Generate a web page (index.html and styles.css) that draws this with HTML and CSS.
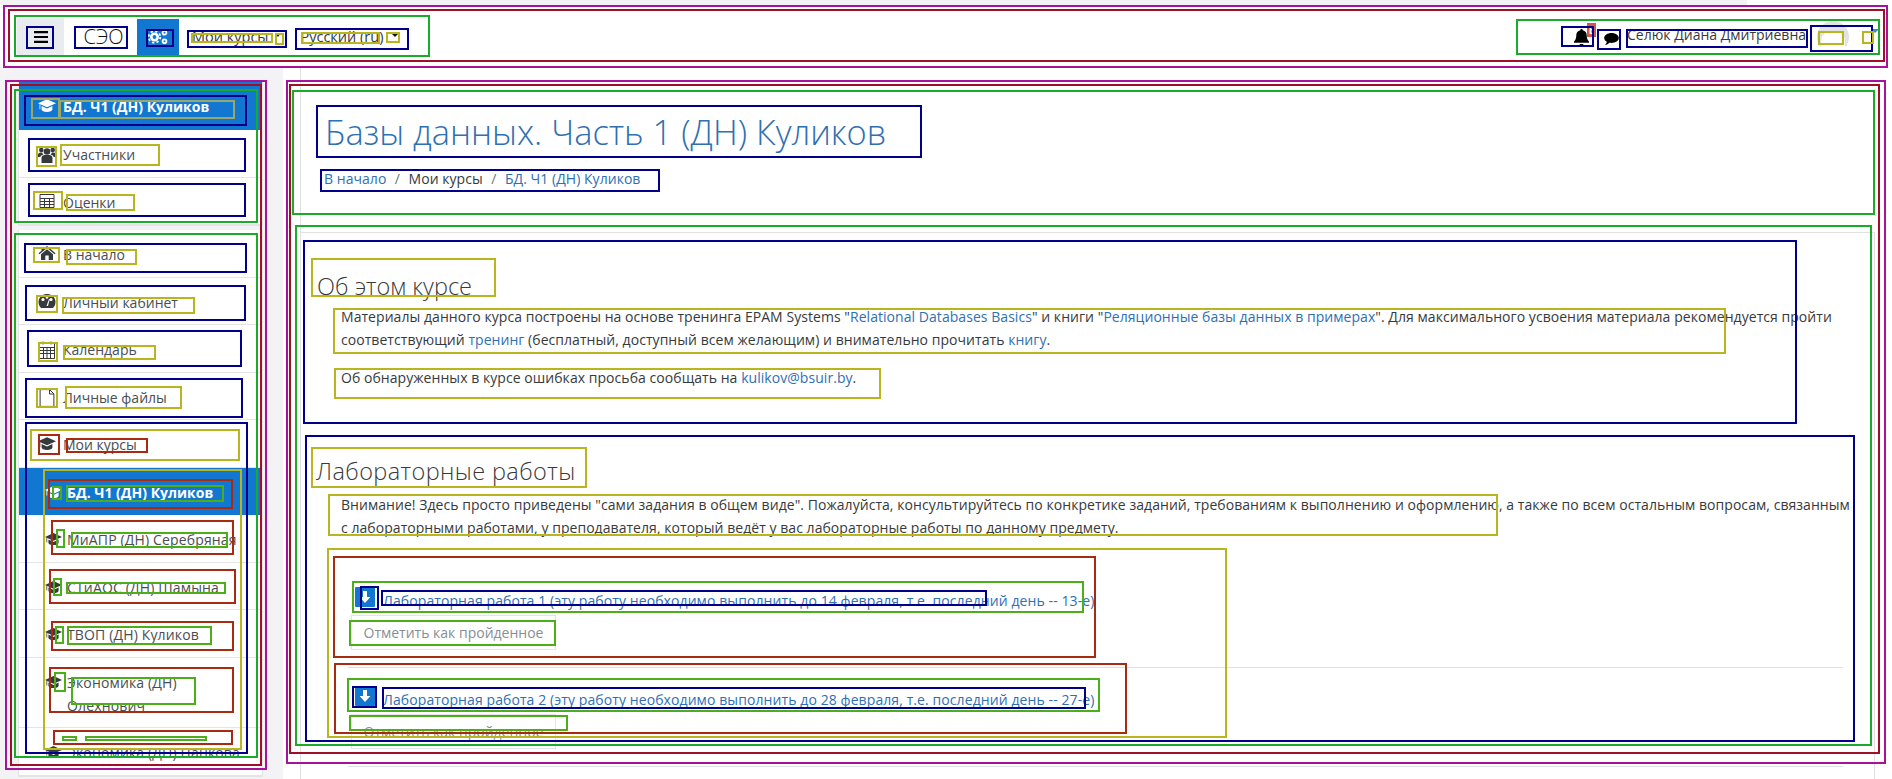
FILE: index.html
```html
<!DOCTYPE html>
<html lang="ru">
<head>
<meta charset="utf-8">
<title>Базы данных. Часть 1 (ДН) Куликов</title>
<link rel="stylesheet" href="styles.css">
</head>
<body>
<svg width="0" height="0" class="defs">
  <symbol id="i-cap" viewBox="0 0 20 16"><path d="M10 1 20 5.5 10 10 0 5.5Z"/><path d="M4 8.6v3.9c0 1.6 2.8 2.7 6 2.700s6-1.100 6-2.700V8.600l-6 2.800Z"/><path d="M1.700 6.600h.9v5.600h-.9Z"/></symbol>
  <symbol id="i-arrow" viewBox="0 0 20 20"><rect width="20" height="20" rx="1" fill="#1177d1"/><path d="M8 4h4v6h3.400L10 16 4.600 10H8Z" fill="#fff"/></symbol>
</svg>

<div class="topstrip"></div>
<header class="navbar">
  <div class="nav-left">
    <button class="burger" aria-label="Меню">
      <svg width="14" height="14" viewBox="0 0 14 14"><path d="M0 1h14v2.200H0ZM0 5.900h14v2.200H0ZM0 10.800h14V13H0Z"/></svg>
    </button>
    <a class="brand">СЭО</a>
    <span class="gearbox">
      <svg width="22" height="16" viewBox="0 0 22 16" fill="none" stroke="#fff"><circle cx="7.500" cy="8" r="3.200" stroke-width="2.600"/><circle cx="7.500" cy="8" r="5.800" stroke-width="1.800" stroke-dasharray="2.300 2.250"/><circle cx="17.500" cy="3.800" r="1.900" stroke-width="1.800"/><circle cx="17.500" cy="12.200" r="1.900" stroke-width="1.800"/></svg>
    </span>
    <span class="menu-item">Мои курсы<i class="caret"></i></span>
    <span class="menu-item lang">Русский ‎(ru)‎<i class="caret"></i></span>
  </div>
  <div class="nav-right">
    <span class="bell">
      <svg width="15" height="17" viewBox="0 0 15 17"><path d="M7.500 0c.7 0 1.200.5 1.200 1.200 2.600.5 4 2.600 4 5.100 0 3.600 1.100 5 2.300 6.200v1.300H0v-1.300c1.200-1.200 2.300-2.600 2.300-6.200 0-2.500 1.400-4.600 4-5.100C6.300.5 6.800 0 7.500 0ZM5.500 15h4a2 2 0 0 1-4 0Z"/></svg>
      <b class="badge">Е</b>
    </span>
    <svg class="chat" width="15" height="12" viewBox="0 0 17 14"><path d="M8.500 0c4.700 0 8.500 2.600 8.500 5.800s-3.800 5.800-8.500 5.800c-.8 0-1.600-.1-2.300-.2C4.800 12.800 3 14 1 14c1-.9 1.900-2.200 2-3.700C1.200 9.200 0 7.600 0 5.800 0 2.600 3.800 0 8.500 0Z"/></svg>
    <span class="username">Селюк Диана Дмитриевна</span>
    <span class="avatar"><i></i></span>
    <i class="user-caret"></i>
  </div>
</header>

<div class="layout">
  <aside class="sidebar">
    <nav class="block first">
      <a class="item head active strong"><svg class="ic" width="18" height="15"><use href="#i-cap"/></svg>БД. Ч1 (ДН) Куликов</a>
      <a class="item"><svg class="ic" width="18" height="18" viewBox="0 0 18 18"><circle cx="9" cy="5.500" r="3.300"/><circle cx="3.300" cy="4" r="2.300"/><circle cx="14.700" cy="4" r="2.300"/><path d="M3.500 17v-5c0-2 1.500-3 3-3h5c1.500 0 3 1 3 3v5ZM0 11V9c0-1.500 1-2.500 2.500-2.500h1.700c.2 1 .8 1.600 1.300 2C3.500 9 2.500 10 2.300 11ZM18 11V9c0-1.500-1-2.500-2.500-2.500h-1.700c-.2 1-.8 1.600-1.300 2 2 .5 3 1.500 3.200 2.500Z"/></svg>Участники</a>
      <a class="item"><svg class="ic line" width="17" height="14" viewBox="0 0 17 14"><path d="M1.500.5h14v13h-14ZM1.500 4.500h14M1.500 7.500h14M1.500 10.500h14M6 4.500v9M11 4.500v9"/></svg>Оценки</a>
    </nav>
    <nav class="block">
      <a class="item"><svg class="ic" width="17" height="14" viewBox="0 0 17 14"><path d="M8.500 0 17 7.300l-.9 1L8.500 1.900.9 8.300 0 7.300 3 4.700V1h2v2ZM8.500 3.200 14.500 8.300V14H10.200V9.500H6.800V14H2.500V8.300Z"/></svg>В начало</a>
      <a class="item"><svg class="ic" width="17" height="14" viewBox="0 0 17 14"><path d="M3.500 1.500C5 .5 6.700 0 8.500 0s3.500.5 5 1.500C15.700 3 17 5.300 17 8c0 2.500-1 4.500-2.500 6h-12C1 12.500 0 10.500 0 8c0-2.700 1.300-5 3.500-6.500Z"/><circle cx="4.500" cy="5.500" r="1.600" fill="#fff"/><circle cx="8.500" cy="3.500" r="1.300" fill="#fff"/><circle cx="12.500" cy="5.500" r="1.600" fill="#fff"/><path d="M8 12 10.500 5h.8L9.500 12Z" fill="#fff"/></svg>Личный кабинет</a>
      <a class="item"><svg class="ic line" width="16" height="18" viewBox="0 0 16 18"><path d="M.500 2.500h15v15H.500ZM.500 6.500h15M.500 9.500h15M.500 12.500h15M4.500 6.500v11M8 6.500v11M11.500 6.500v11M4 .5v3M12 .5v3"/></svg>Календарь</a>
      <a class="item"><svg class="ic line" width="15" height="18" viewBox="0 0 15 18"><path d="M.600.600h9.500l4.300 4.300v12.500H.600ZM10 .600V5h4.400"/></svg>Личные файлы</a>
      <a class="item"><svg class="ic" width="18" height="15"><use href="#i-cap"/></svg>Мои курсы</a>
      <a class="item sub active strong"><svg class="ic" width="17" height="14"><use href="#i-cap"/></svg>БД. Ч1 (ДН) Куликов</a>
      <a class="item sub"><svg class="ic" width="17" height="14"><use href="#i-cap"/></svg><span>МиАПР (ДН) Серебряная</span></a>
      <a class="item sub"><svg class="ic" width="17" height="14"><use href="#i-cap"/></svg><span>СТиАОС (ДН) Шамына</span></a>
      <a class="item sub"><svg class="ic" width="17" height="14"><use href="#i-cap"/></svg><span>ТВОП (ДН) Куликов</span></a>
      <a class="item sub"><svg class="ic" width="17" height="14"><use href="#i-cap"/></svg><span>Экономика (ДН)<br>Олехнович</span></a>
      <a class="item sub"><svg class="ic" width="17" height="14"><use href="#i-cap"/></svg><span>Экономика (ДН) Панкова</span></a>
    </nav>
  </aside>

  <main class="content">
    <section class="page-head">
      <h1 class="page-title">Базы данных. Часть 1 (ДН) Куликов</h1>
      <ol class="crumbs">
        <li><a>В начало</a></li>
        <li class="sep">/</li>
        <li>Мои курсы</li>
        <li class="sep">/</li>
        <li><a>БД. Ч1 (ДН) Куликов</a></li>
      </ol>
    </section>
    <section class="course">
      <div class="topic">
        <h3 class="topic-title">Об этом курсе</h3>
        <p>Материалы данного курса построены на основе тренинга EPAM Systems "<a>Relational Databases Basics</a>" и книги "<a>Реляционные базы данных в примерах</a>". Для максимального усвоения материала рекомендуется пройти<br>соответствующий <a>тренинг</a> (бесплатный, доступный всем желающим) и внимательно прочитать <a>книгу</a>.</p>
        <p class="mail">Об обнаруженных в курсе ошибках просьба сообщать на <a>kulikov@bsuir.by</a>.</p>
      </div>
      <div class="topic labs">
        <h3 class="topic-title">Лабораторные работы</h3>
        <p>Внимание! Здесь просто приведены "сами задания в общем виде". Пожалуйста, консультируйтесь по конкретике заданий, требованиям к выполнению и оформлению, а также по всем остальным вопросам, связанным<br>с лабораторными работами, у преподавателя, который ведёт у вас лабораторные работы по данному предмету.</p>
        <ul class="activities">
          <li class="activity">
            <div class="act-link"><svg width="20" height="20"><use href="#i-arrow"/></svg><a>Лабораторная работа 1 (эту работу необходимо выполнить до 14 февраля, т.е. последний день -- 13-е)</a></div>
            <button class="done">Отметить как пройденное</button>
          </li>
          <li class="activity">
            <div class="act-link"><svg width="20" height="20"><use href="#i-arrow"/></svg><a>Лабораторная работа 2 (эту работу необходимо выполнить до 28 февраля, т.е. последний день -- 27-е)</a></div>
            <button class="done">Отметить как пройденное</button>
          </li>
        </ul>
      </div>
    </section>
  </main>
</div>

<svg class="overlay" width="1892" height="779" viewBox="0 0 1892 779" fill="none" stroke-width="2" aria-hidden="true">
  <g stroke="#a6139b">
    <path d="M4 6H1887V67H4Z"/><path d="M6 81H266V769H6Z"/><path d="M287 81H1885V763H287Z"/>
  </g>
  <g stroke="#a00f2a">
    <path d="M9 10H1884V61H9Z"/><path d="M11 85H261V765H11Z"/><path d="M290 85H1879V753H290Z"/>
  </g>
  <g stroke="#1aab2a">
    <path d="M15 16H429V56H15Z"/><path d="M1517 20H1879V54H1517Z"/><path d="M15 90H257V222H15Z"/><path d="M15 234H257V757H15Z"/><path d="M293 91H1874V214H293Z"/><path d="M296 226H1871V745H296Z"/>
  </g>
  <g stroke="#00008b">
    <path d="M27 27H53V48H27Z"/><path d="M75 27H127V48H75Z"/><path d="M147 30H173V46H147Z"/><path d="M188 31H286V47H188Z"/><path d="M296 29H408V49H296Z"/>
    <path d="M1562 27H1593V46H1562Z"/><path d="M1598 30H1620V49H1598Z"/><path d="M1627 30H1807V47H1627Z"/><path d="M1811 26H1872V51H1811Z"/>
    <path d="M25 96H246V125H25Z"/><path d="M29 139H245V171H29Z"/><path d="M29 184H245V216H29Z"/>
    <path d="M25 244H246V272H25Z"/><path d="M26 286H245V320H26Z"/><path d="M28 331H241V366H28Z"/><path d="M26 379H242V417H26Z"/><path d="M26 423H247V753H26Z"/>
    <path d="M317 106H921V157H317Z"/><path d="M321 170H659V191H321Z"/>
    <path d="M304 241H1796V423H304Z"/><path d="M306 436H1854V741H306Z"/>
    <path d="M361 587H378V609H361Z"/><path d="M382 591H986V605H382Z"/><path d="M353 687H376V707H353Z"/><path d="M383 688H1085V708H383Z"/>
  </g>
  <g stroke="#b8b51f">
    <path d="M192 34H272V42H192Z"/><path d="M276 34H283V44H276Z"/><path d="M302 33H379V43H302Z"/><path d="M387 33H399V42H387Z"/>
    <path d="M1819 32H1843V44H1819Z"/><path d="M1863 32H1873V43H1863Z"/>
    <path d="M37 147H56V166H37Z"/><path d="M61 145H159V165H61Z"/><path d="M34 192H62V209H34Z"/><path d="M67 195H134V210H67Z"/>
    <path d="M34 248H59V262H34Z"/><path d="M67 250H136V264H67Z"/><path d="M37 296H57V312H37Z"/><path d="M63 298H194V313H63Z"/>
    <path d="M39 343H57V361H39Z"/><path d="M64 346H155V359H64Z"/><path d="M37 389H57V407H37Z"/><path d="M66 387H181V408H66Z"/>
    <path d="M31 430H239V460H31Z"/><path d="M44 470H241V749H44Z"/>
    <path d="M312 259H495V296H312Z"/><path d="M334 309H1725V353H334Z"/><path d="M335 369H880V398H335Z"/>
    <path d="M312 448H586V487H312Z"/><path d="M329 495H1497V535H329Z"/><path d="M328 549H1226V737H328Z"/>
  </g>
  <g stroke="#98a868">
    <path d="M32 99H59V118H32Z"/><path d="M60 101H234V118H60Z"/>
  </g>
  <g stroke="#a82a10">
    <path d="M39 435H59V454H39Z"/><path d="M67 439H147V452H67Z"/><path d="M49 480H232V508H49Z"/>
    <path d="M52 521H233V554H52Z"/><path d="M50 570H235V603H50Z"/><path d="M52 622H233V650H52Z"/><path d="M50 668H233V712H50Z"/><path d="M54 731H232V744H54Z"/>
    <path d="M334 557H1095V657H334Z"/><path d="M335 664H1126V733H335Z"/>
  </g>
  <g stroke="#4caf1a">
    <path d="M53 487H61V499H53Z"/><path d="M67 486H223V501H67Z"/>
    <path d="M57 530H64V547H57Z"/><path d="M72 533H227V547H72Z"/><path d="M54 579H61V595H54Z"/><path d="M67 583H225V593H67Z"/>
    <path d="M56 627H63V643H56Z"/><path d="M68 627H211V644H68Z"/><path d="M55 673H65V691H55Z"/><path d="M72 678H195V704H72Z"/>
    <path d="M63 737H76V740H63Z"/><path d="M86 737H206V740H86Z"/>
    <path d="M353 582H1083V612H353Z"/><path d="M350 621H555V645H350Z"/><path d="M348 679H1099V711H348Z"/><path d="M350 716H567V730H350Z"/>
  </g>
</svg>
</body>
</html>
```

FILE: styles.css
```css
* { box-sizing: border-box; }
html, body { margin: 0; height: 779px; overflow: hidden; }
body {
  background: #fff;
  color: #373a3c;
  font: 14px/23px "Open Sans", "Noto Sans", sans-serif;
}
.defs { position: absolute; }
a { color: #2f6fb3; text-decoration: none; }

.topstrip { height: 5px; width: 1747px; background: #f3f3f6; }

/* top navigation */
.navbar {
  height: 62px;
  padding: 13px 13px 8px 17px;
  display: flex;
  justify-content: space-between;
  align-items: flex-start;
  background: #fff;
}
.nav-left { display: flex; align-items: center; height: 37px; }
.burger {
  width: 47px; height: 37px; border: 0; padding: 0;
  background: #e9ecef;
  display: flex; align-items: center; justify-content: center;
}
.brand { width: 73px; padding-left: 6px; text-align: center; font-size: 20px; font-weight: 300; color: #111; }
.gearbox {
  width: 42px; height: 36px; background: #1177d1;
  display: flex; align-items: center; justify-content: center;
}
.menu-item { margin-left: 13px; font-size: 14.500px; color: #373a3c; display: flex; align-items: center; }
.menu-item.lang { margin-left: 19px; }
.caret {
  margin-left: 7px; margin-top: -3px;
  border: 3.500px solid transparent; border-top: 4.500px solid #111; border-bottom: 0;
}
.lang .caret { margin-left: 7px; margin-top: -5px; border-width: 5px 5px 0; }
.nav-right { display: flex; align-items: center; height: 40px; position: relative; top: -1px; }
.bell { position: relative; display: flex; margin-right: 15px; }
.badge {
  position: absolute; left: 13px; top: -6px;
  width: 9px; height: 14px;
  background: #d9534f; color: #fff;
  font: 700 10px/14px "Open Sans", sans-serif; text-align: center;
}
.chat { margin-right: 8px; margin-top: 4px; }
.username { font-size: 14px; line-height: 20px; color: #373a3c; width: 180px; white-space: nowrap; margin-top: -4px; }
.avatar {
  width: 32px; height: 32px; margin-left: 10px;
  border-radius: 50%; background: #e2e2e2;
  display: flex; align-items: center; justify-content: center;
}
.avatar i { width: 24px; height: 22px; background: #fff; margin-top: 10px; border-radius: 10px 10px 0 0; }
.user-caret {
  margin-left: 22px; margin-top: -12px;
  border: 4px solid transparent; border-top: 4px solid #3c8dbc; border-bottom: 0;
}

/* columns */
.layout { display: flex; height: 712px; }
.sidebar {
  width: 283px; flex: none;
  background: #f3f3f6;
  padding: 14px 20px 0 18px;
}
.block { background: #fff; border: 1px solid #e4e4e4; border-top: 0; }
.block.first { margin-bottom: 4px; }
.item {
  display: flex; align-items: flex-start;
  padding: 13px 0 10.500px 19px;
  line-height: 23px;
  font-size: 14px; color: #4a4e51;
  border-bottom: 1px solid #e4e4e4;
}
.item.head { padding-top: 14px; padding-bottom: 11px; }
.item .ic { flex: none; width: 18px; margin-right: 7px; margin-top: 3px; fill: #373a3c; }
.item .ic.line { fill: none; stroke: #373a3c; }
.item.sub { padding-left: 26px; }
.item.sub .ic { width: 17px; margin-right: 5px; margin-top: 4px; }
.item.sub span { flex: 1; white-space: nowrap; letter-spacing: .15px; }
.item.active { background: #1177d1; color: #fff; border-bottom-color: #1177d1; }
.item.active .ic { fill: #fff; }
.strong { font-weight: 700; }

/* main */
.content { flex: 1; min-width: 0; padding: 0 17px 0 17px; background: #fff; }
.page-head { height: 165px; border-left: 1px solid #e0e0e0; padding: 41px 0 0 24px; }
.page-title { margin: 0; font-size: 34.400px; line-height: 48px; font-weight: 300; color: #2f6fb3; }
.crumbs { list-style: none; display: flex; margin: 12px 0 0 -1px; padding: 0; font-size: 14px; line-height: 22px; letter-spacing: .04px; }
.crumbs .sep { margin: 0 8.500px; color: #6c757d; }
.course {
  border: 1px solid #e0e0e0; border-width: 1px 1px 0 1px;
  padding: 0 31px 0 16px;
  height: 560px;
}
.topic-title { margin: 0; font-size: 23.500px; line-height: 30px; font-weight: 300; color: #3a3a3a; }
.topic { height: 215px; padding-top: 38px; }
.topic p { margin: 4px 0 0 24px; white-space: nowrap; letter-spacing: .05px; }
.topic p.mail { margin-top: 15px; }
.topic.labs { padding-top: 8px; }
.labs .topic-title { letter-spacing: .4px; margin-left: -1px; }
.labs p { margin-top: 7px; }
.activities { list-style: none; margin: 0; padding: 0 0 0 31px; }
.activity { height: 99px; padding-top: 20px; border-bottom: 1px solid #e0e0e0; }
.activity:first-child { margin-top: 30px; }
.act-link { display: flex; align-items: center; height: 22px; white-space: nowrap; letter-spacing: .09px; }
.act-link svg { margin: -6px 8px 0 7px; flex: none; }
.done {
  display: block; width: 205px; height: 35px; margin: 4px 0 0 3px;
  background: #fff; border: 1px solid #e4e4e4; color: #868e96;
  font: 14px/23px "Open Sans", sans-serif;
}

/* review annotation boxes drawn over the page */
.overlay { position: absolute; left: 0; top: 0; pointer-events: none; }
```
